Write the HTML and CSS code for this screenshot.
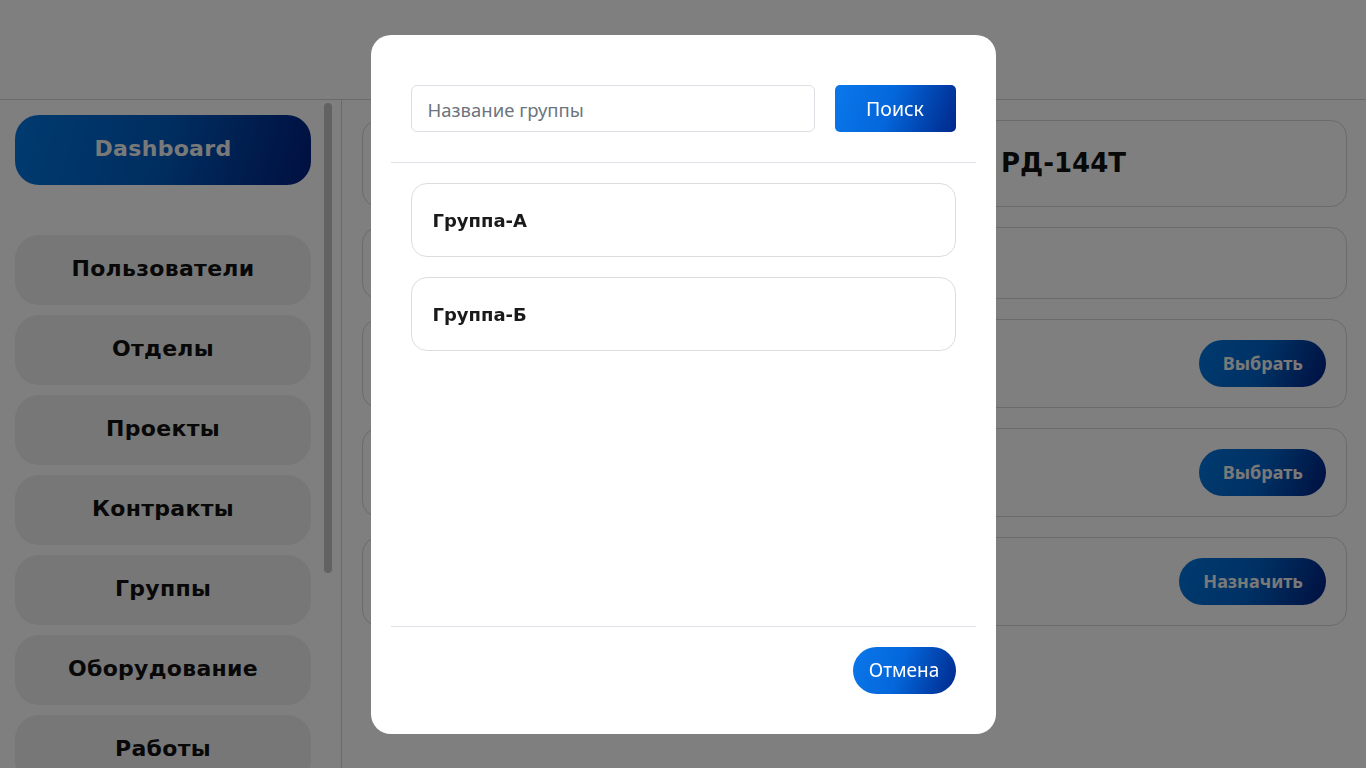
FILE: index.html
```html
<!DOCTYPE html>
<html lang="ru">
<head>
<meta charset="utf-8">
<title>Группы</title>
<link rel="stylesheet" href="styles.css">
</head>
<body>
<div class="app">
  <header class="topbar"></header>
  <div class="layout">
    <aside class="sidebar">
      <nav class="nav">
        <a class="nav-btn nav-active">Dashboard</a>
        <div class="nav-spacer"></div>
        <a class="nav-btn">Пользователи</a>
        <a class="nav-btn">Отделы</a>
        <a class="nav-btn">Проекты</a>
        <a class="nav-btn">Контракты</a>
        <a class="nav-btn">Группы</a>
        <a class="nav-btn">Оборудование</a>
        <a class="nav-btn">Работы</a>
      </nav>
      <div class="scroll-track"><div class="scroll-thumb"></div></div>
    </aside>
    <main class="content">
      <section class="card card-title"><h2 class="title">РД-144Т</h2></section>
      <section class="card card-info"><span class="info">Описание работы</span></section>
      <section class="card card-row"><span class="row-label">Ответственный</span><button class="pill">Выбрать</button></section>
      <section class="card card-row"><span class="row-label">Оборудование</span><button class="pill">Выбрать</button></section>
      <section class="card card-row"><span class="row-label">Группа</span><button class="pill">Назначить</button></section>
    </main>
  </div>
</div>

<div class="overlay">
  <div class="modal">
    <div class="modal-head">
      <input class="search-input" type="text" placeholder="Название группы">
      <button class="search-btn">Поиск</button>
    </div>
    <div class="modal-body">
      <div class="group-item">Группа-А</div>
      <div class="group-item">Группа-Б</div>
    </div>
    <div class="modal-foot">
      <button class="cancel-btn">Отмена</button>
    </div>
  </div>
</div>
</body>
</html>
```

FILE: styles.css
```css
* { box-sizing: border-box; }
html, body { margin: 0; padding: 0; }
body {
  width: 1366px;
  height: 768px;
  overflow: hidden;
  background: #fff;
  font-family: "Noto Sans", "Open Sans", sans-serif;
  color: #111;
}
.app { display: flex; flex-direction: column; height: 768px; }
.topbar { height: 100px; border-bottom: 1px solid #d4d4d4; flex: none; }
.layout { display: flex; flex: 1; min-height: 0; }
.sidebar {
  width: 342px;
  flex: none;
  border-right: 1px solid #d4d4d4;
  display: flex;
  overflow: hidden;
}
.nav {
  display: flex;
  flex-direction: column;
  gap: 10px;
  padding: 15px 0 0 15px;
  width: 311px;
}
.nav-btn {
  display: flex;
  align-items: center;
  justify-content: center;
  height: 70px;
  border-radius: 24px;
  background: #eeeeee;
  font-family: "DejaVu Sans", sans-serif;
  font-weight: 700;
  font-size: 22px;
  letter-spacing: 0.3px;
  color: #111;
  flex: none;
  padding-bottom: 3px;
}
.nav-active {
  background: linear-gradient(105deg, #0076e0 0%, #005cc0 50%, #001f80 100%);
  color: #f2f2f2;
  padding-bottom: 4px;
}
.nav-spacer { height: 30px; flex: none; }
.scroll-track { width: 30px; position: relative; padding: 3px 0 0 13px; }
.scroll-thumb { width: 8px; height: 470px; border-radius: 4px; background: #c4c4c4; }

.content {
  flex: 1;
  padding: 20px 19px 0 20px;
  display: flex;
  flex-direction: column;
  gap: 20px;
}
.card {
  border: 1px solid #d6d6d6;
  border-radius: 16px;
  display: flex;
  align-items: center;
  flex: none;
}
.card-title { height: 87px; padding-left: 638px; padding-bottom: 2px; }
.title { margin: 0; font-family: "DejaVu Sans", sans-serif; font-weight: 700; font-size: 26px; color: #111; }
.card-info { height: 72px; padding-left: 24px; }
.info { font-size: 16px; color: #333; }
.card-row { height: 89px; padding: 0 20px 0 24px; justify-content: space-between; }
.row-label { font-size: 16px; color: #333; }
.pill {
  height: 47px;
  padding: 0 23px 2px 24px;
  border: none;
  border-radius: 24px;
  background: linear-gradient(110deg, #0076e0 0%, #0062c8 50%, #002080 100%);
  color: #f2f2f2;
  font-family: "Noto Sans", sans-serif;
  font-weight: 700;
  font-size: 18px;
}

.overlay {
  position: fixed;
  inset: 0;
  background: rgba(0, 0, 0, 0.5);
  display: flex;
  justify-content: center;
  padding-top: 35px;
}
.modal {
  width: 625px;
  height: 699px;
  background: #fff;
  border-radius: 20px;
  display: flex;
  flex-direction: column;
  padding: 0 20px;
}
.modal-head {
  display: flex;
  gap: 20px;
  padding: 50px 20px 30px;
  border-bottom: 1px solid #dee2e6;
}
.search-input {
  flex: 1;
  height: 47px;
  border: 1px solid #dcdfe4;
  border-radius: 6px;
  padding: 1px 16px 0;
  font-family: "Noto Sans", sans-serif;
  font-size: 18.5px;
  color: #333;
  outline: none;
}
.search-input::placeholder { color: #6c757d; }
.search-btn {
  width: 121px;
  height: 47px;
  border: none;
  border-radius: 5px;
  background: linear-gradient(110deg, #0a78ea 0%, #0467dc 45%, #00288a 100%);
  color: #fff;
  font-family: "Noto Sans", sans-serif;
  font-size: 19.5px;
  padding-bottom: 2px;
}
.modal-body {
  flex: 1;
  padding: 20px 20px 0;
  display: flex;
  flex-direction: column;
  gap: 20px;
}
.group-item {
  height: 74px;
  border: 1px solid #dcdcdc;
  border-radius: 16px;
  display: flex;
  align-items: center;
  padding-left: 21px;
  font-family: "DejaVu Sans", sans-serif;
  font-weight: 700;
  font-size: 18px;
  color: #1a1a1a;
}
.modal-foot {
  border-top: 1px solid #dee2e6;
  padding: 20px 20px 40px;
  display: flex;
  justify-content: flex-end;
}
.cancel-btn {
  width: 103px;
  height: 47px;
  border: none;
  border-radius: 24px;
  background: linear-gradient(110deg, #0a78ea 0%, #0467dc 45%, #00288a 100%);
  color: #fff;
  font-family: "Noto Sans", sans-serif;
  font-size: 19px;
  padding-bottom: 2px;
}
```
